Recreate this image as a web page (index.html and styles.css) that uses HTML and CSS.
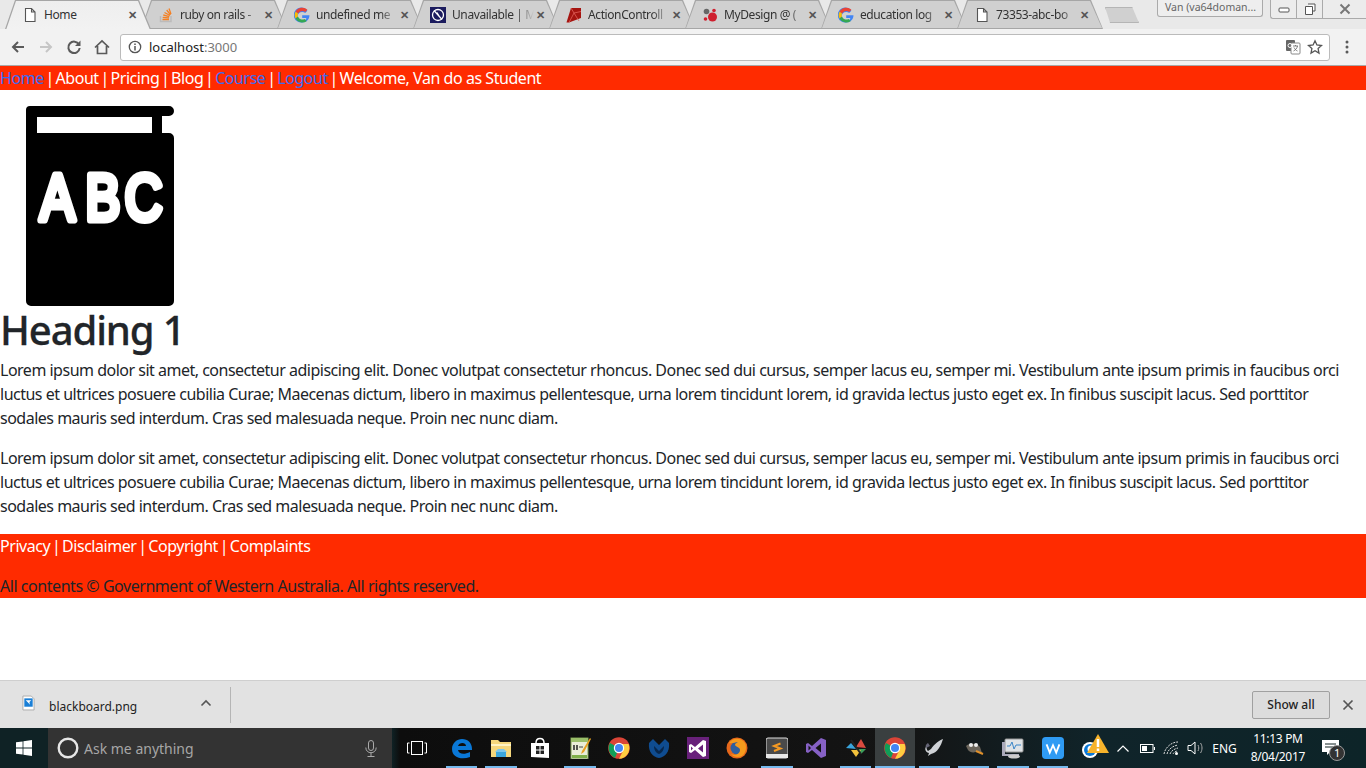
FILE: index.html
```html
<!DOCTYPE html>
<html>

<head>
  <meta charset="utf-8">
  <meta name="viewport" content="width=device-width">
  <title>Home</title>
  <link rel="stylesheet" href="styles.css">
</head>

<body>
  <!-- browser tabs -->
  <header class="tabstrip">
    <div class="tab active">
      <svg class="favicon" viewBox="0 0 16 16"><path d="M3.5 1.5h6l3.500 3.500v9.500h-9.500zM9.500 1.500v3.500h3.500" fill="#fff" stroke="#555" stroke-width="1.100"/></svg>
      <span class="tab-title">Home</span><span class="tab-close">✕</span>
    </div>
    <div class="tab">
      <svg class="favicon" viewBox="0 0 16 16"><path d="M2.500 9v5.500h10.500V9" fill="none" stroke="#bcbbbb" stroke-width="1.500"/><path d="M4.500 12.500h6.500M4.700 10.300l6.300.6M5.300 8l6 1.700M6.500 5.500l5.500 3M8.700 3l3.800 4.800M11 1.500l2 5.500" fill="none" stroke="#f48024" stroke-width="1.300"/></svg>
      <span class="tab-title">ruby on rails -</span><span class="tab-close">✕</span>
    </div>
    <div class="tab">
      <svg class="favicon" viewBox="0 0 16 16"><use href="#g-logo"/></svg>
      <span class="tab-title">undefined me</span><span class="tab-close">✕</span>
    </div>
    <div class="tab">
      <svg class="favicon" viewBox="0 0 16 16"><rect width="16" height="16" fill="#1c1c5e"/><circle cx="8" cy="8" r="5.500" fill="none" stroke="#fff" stroke-width="1.300"/><path d="M4 3.500l8 9M7 5.500l3 5" stroke="#fff" stroke-width="1.200"/></svg>
      <span class="tab-title">Unavailable | M</span><span class="tab-close">✕</span>
    </div>
    <div class="tab">
      <svg class="favicon" viewBox="0 0 16 16"><path d="M5 1h10v10L3 15.500H.500z" fill="#a51410"/><path d="M5 1l3 5 7-1.500M8 6l-5 9.500M8 6l5 8" fill="none" stroke="#e2615a" stroke-width=".8"/></svg>
      <span class="tab-title">ActionControll</span><span class="tab-close">✕</span>
    </div>
    <div class="tab">
      <svg class="favicon" viewBox="0 0 16 16"><circle cx="4.500" cy="4.500" r="2.800" fill="#666"/><circle cx="10.500" cy="10" r="4.500" fill="#cf1f2e"/><circle cx="12" cy="3.500" r="1.800" fill="#cf1f2e"/><circle cx="3.500" cy="12" r="1.800" fill="#cf1f2e"/></svg>
      <span class="tab-title">MyDesign @ (</span><span class="tab-close">✕</span>
    </div>
    <div class="tab">
      <svg class="favicon" viewBox="0 0 16 16"><use href="#g-logo"/></svg>
      <span class="tab-title">education log</span><span class="tab-close">✕</span>
    </div>
    <div class="tab">
      <svg class="favicon" viewBox="0 0 16 16"><path d="M3.500 1.500h6l3.500 3.500v9.500h-9.500zM9.500 1.500v3.500h3.500" fill="#fff" stroke="#555" stroke-width="1.100"/></svg>
      <span class="tab-title">73353-abc-bo</span><span class="tab-close">✕</span>
    </div>
    <div class="new-tab"></div>
    <div class="window-controls">
      <div class="profile">Van (va64doman...</div>
      <div class="win-buttons">
        <span class="win-btn"><svg width="12" height="8" viewBox="0 0 12 8"><rect x="1" y="3" width="10" height="4" rx="1" fill="#fff" stroke="#555"/></svg></span>
        <span class="win-btn"><svg width="12" height="12" viewBox="0 0 12 12"><path d="M4 1h7v7H9M1.500 3.500h7v8h-7z" fill="#fff" stroke="#555"/></svg></span>
        <span class="win-btn wide"><svg width="12" height="12" viewBox="0 0 12 12"><path d="M1.500 1.500l9 9M10.500 1.500l-9 9" stroke="#777" stroke-width="2"/></svg></span>
      </div>
    </div>
  </header>

  <!-- address bar -->
  <div class="toolbar">
    <svg class="tool-icon" viewBox="0 0 16 16"><path d="M14 8H3M8 3L3 8l5 5" fill="none" stroke="#5a5a5a" stroke-width="2"/></svg>
    <svg class="tool-icon" viewBox="0 0 16 16"><path d="M2 8h11M8 3l5 5-5 5" fill="none" stroke="#c6c6c6" stroke-width="2"/></svg>
    <svg class="tool-icon" viewBox="0 0 16 16"><path d="M13 5.500A5.700 5.700 0 1 0 13.700 9" fill="none" stroke="#5a5a5a" stroke-width="2"/><path d="M14.500 1.500v5.500H9z" fill="#5a5a5a"/></svg>
    <svg class="tool-icon" viewBox="0 0 16 16"><path d="M1 8.500L8 2l7 6.500M3.500 7v7.500h9V7" fill="none" stroke="#5a5a5a" stroke-width="1.700"/></svg>
    <div class="omnibox">
      <svg class="info" viewBox="0 0 14 14"><circle cx="7" cy="7" r="5.700" fill="none" stroke="#555" stroke-width="1.300"/><path d="M7 6v4.500M7 3.500v1.500" stroke="#555" stroke-width="1.500"/></svg>
      <span class="url">localhost<span class="port">:3000</span></span>
      <svg class="omni-right" viewBox="0 0 16 16"><rect x="1" y="1" width="9" height="11" rx="1" fill="#666"/><rect x="6" y="4" width="9" height="11" rx="1" fill="#fff" stroke="#888"/><path d="M8 7h5M10.500 6v1M12.500 7c-.5 2.500-2 4-4 5M9 8.500c.8 1.500 2 3 3.500 3.500" fill="none" stroke="#666" stroke-width=".8"/><circle cx="5" cy="6.500" r="2" fill="none" stroke="#fff"/></svg>
      <svg class="omni-right star" viewBox="0 0 16 16"><path d="M8 1.800l1.900 4.200 4.600.5-3.400 3.100.9 4.500-4-2.300-4 2.300.9-4.500L1.500 6.500l4.600-.5z" fill="#fff" stroke="#555" stroke-width="1.300"/></svg>
    </div>
    <svg class="menu-dots" viewBox="0 0 4 16"><circle cx="2" cy="3" r="1.500"/><circle cx="2" cy="8" r="1.500"/><circle cx="2" cy="13" r="1.500"/></svg>
  </div>

  <!-- the page itself -->
  <div class="page">
    <nav class="topnav">
      <a href="#">Home</a> <span class="sep">|</span> About <span class="sep">|</span> Pricing <span class="sep">|</span> Blog <span class="sep">|</span> <a href="#">Course</a> <span class="sep">|</span> <a href="#">Logout</a> <span class="sep">|</span> Welcome, Van do as Student
    </nav>

    <svg class="logo" width="200" height="216" viewBox="0 0 200 216">
      <path d="M30 16h139a5 5 0 0 1 0 10h-7v17h7a5 5 0 0 1 5 5v163a5 5 0 0 1-5 5H31a5 5 0 0 1-5-5V20a4 4 0 0 1 4-4z"/>
      <rect x="37" y="27" width="115" height="16" fill="#fff"/>
      <text class="logo-text" x="50 107 156" y="130.500" transform="scale(0.8 1)">ABC</text>
    </svg>

    <h1>Heading 1</h1>
    <p>Lorem ipsum dolor sit amet, consectetur adipiscing elit. Donec volutpat consectetur rhoncus. Donec sed dui cursus, semper lacus eu, semper mi. Vestibulum ante ipsum primis in faucibus orci luctus et ultrices posuere cubilia Curae; Maecenas dictum, libero in maximus pellentesque, urna lorem tincidunt lorem, id gravida lectus justo eget ex. In finibus suscipit lacus. Sed porttitor sodales mauris sed interdum. Cras sed malesuada neque. Proin nec nunc diam.</p>
    <p>Lorem ipsum dolor sit amet, consectetur adipiscing elit. Donec volutpat consectetur rhoncus. Donec sed dui cursus, semper lacus eu, semper mi. Vestibulum ante ipsum primis in faucibus orci luctus et ultrices posuere cubilia Curae; Maecenas dictum, libero in maximus pellentesque, urna lorem tincidunt lorem, id gravida lectus justo eget ex. In finibus suscipit lacus. Sed porttitor sodales mauris sed interdum. Cras sed malesuada neque. Proin nec nunc diam.</p>

    <footer class="site-footer">
      <div class="footer-links">Privacy <span class="sep">|</span> Disclaimer <span class="sep">|</span> Copyright <span class="sep">|</span> Complaints</div>
      <div class="footer-note">All contents © Government of Western Australia. All rights reserved.</div>
    </footer>
  </div>

  <!-- download shelf -->
  <div class="shelf">
    <div class="download">
      <svg class="file-icon" viewBox="0 0 14 16"><path d="M1 .5h9l3 3v12H1z" fill="#fff" stroke="#aaa"/><rect x="2.500" y="3" width="9" height="9" fill="#1a7fd6"/><path d="M4 5h6l-2 2 .5 3-1.500-2z" fill="#fff"/></svg>
      <span class="file-name">blackboard.png</span>
      <svg class="chevron" viewBox="0 0 12 8"><path d="M1.500 6.500L6 2l4.500 4.500" fill="none" stroke="#555" stroke-width="1.600"/></svg>
    </div>
    <button class="show-all">Show all</button>
    <svg class="shelf-close" viewBox="0 0 12 12"><path d="M1.500 1.500l9 9M10.500 1.500l-9 9" stroke="#555" stroke-width="1.700"/></svg>
  </div>

  <!-- windows taskbar -->
  <div class="taskbar">
    <div class="start">
      <svg width="16" height="16" viewBox="0 0 16 16"><path d="M0 2.300l6.600-.9v6.200H0zM7.400 1.300L16 0v7.600H7.400zM0 8.400h6.600v6.200L0 13.700zM7.400 8.400H16V16l-8.600-1.300z" fill="#fff"/></svg>
    </div>
    <div class="search">
      <svg width="22" height="22" viewBox="0 0 22 22"><circle cx="11" cy="11" r="9.300" fill="none" stroke="#e6e6e6" stroke-width="2.400"/></svg>
      <span class="search-text">Ask me anything</span>
      <svg class="mic" width="12" height="17" viewBox="0 0 12 17"><rect x="3.500" y=".5" width="5" height="10" rx="2.500" fill="none" stroke="#aaa"/><path d="M.8 7.500c0 7 10.400 7 10.400 0M6 12.500V16M2.500 16.500h7" fill="none" stroke="#aaa"/></svg>
    </div>
    <div class="task-view">
      <svg width="20" height="14" viewBox="0 0 20 14"><rect x="4.500" y=".5" width="11" height="13" fill="none" stroke="#fff"/><path d="M2.500 2H.5v10h2M17.500 2h2v10h-2" fill="none" stroke="#fff"/></svg>
    </div>
    <div class="apps">
      <span class="app run"><svg viewBox="0 0 22 22"><path d="M11 2c6 0 10 4 10 10v1H7c.5 4 6 5 12 2v5c-8 3-18 1-18-8C1 6 6 2 11 2zm4 7c0-4-7-4-8 0z" fill="#0a78d7"/></svg></span>
      <span class="app run"><svg viewBox="0 0 22 22"><path d="M1 3h7l2 2h11v15H1z" fill="#f5d77c"/><rect x="1" y="7" width="20" height="2" fill="#fff3c4"/><path d="M6 15h10v5H6z" fill="#3aa6dd"/><path d="M8 12h6l3 3H5z" fill="#7cc7ec"/></svg></span>
      <span class="app"><svg viewBox="0 0 22 22"><path d="M2 6h18v15l-18-1z" fill="#fff"/><path d="M7 6c0-6 8-6 8 0" fill="none" stroke="#fff" stroke-width="1.500"/><path d="M7 9h3.500v3.500H7zM11.500 9H15v3.500h-3.500zM7 13.500h3.500V17H7zM11.500 13.500H15V17h-3.500z" fill="#222"/></svg></span>
      <span class="app run"><svg viewBox="0 0 22 22"><rect x="2" y="1" width="17" height="21" fill="#e9edd8" stroke="#7a9a50"/><rect x="2" y="1" width="17" height="4" fill="#9abf6a"/><path d="M5 8v5M8 8v5" stroke="#222" stroke-width="1.500"/><path d="M10 10h4" stroke="#444"/><path d="M21 1l-8 13-1 3 3-2 7-13z" fill="#e8a020"/><path d="M3 18h15v3H3z" fill="#7fb04a"/></svg></span>
      <span class="app"><svg viewBox="0 0 22 22"><use href="#chrome-logo"/></svg></span>
      <span class="app"><svg viewBox="0 0 22 22"><path d="M11 21C5 20 0 15 1 6l4-4 6 6 6-6 4 4c1 9-4 14-10 15z" fill="#0f4c90"/><path d="M11 17c-3-1-5-4-5-8l5 5 5-5c0 4-2 7-5 8z" fill="#07274d"/></svg></span>
      <span class="app"><svg viewBox="0 0 22 22"><rect x="0" y="0" width="22" height="23" fill="#68217a"/><path d="M16 3L8 10 4 7 2 8v7l2 1 4-3 8 7 3-1V4zM4 9.500l2 2-2 2zM16 7.500v8l-5-4z" fill="#fff"/></svg></span>
      <span class="app"><svg viewBox="0 0 22 22"><circle cx="11" cy="11" r="10.500" fill="#e5671b"/><circle cx="11" cy="11" r="6.500" fill="#2f5f9e"/><path d="M3 6c3-5 12-6 16 0 2 4 1 10-3 13-4 2-9 1-11-2 4 2 9 0 9-4 0-3-4-3-5-5 0-2 2-2 3-3-3 0-6 2-9 1z" fill="#f59b1d"/></svg></span>
      <span class="app run"><svg viewBox="0 0 22 22"><rect x="0" y="1" width="22" height="20" rx="2" fill="#4a4a4a" stroke="#ddd"/><rect x="0" y="17" width="22" height="4" fill="#e8e8e8"/><path d="M14.500 6.500L8 9l6.500 2.500L8 14" fill="none" stroke="#f59a23" stroke-width="2"/></svg></span>
      <span class="app"><svg viewBox="0 0 22 22"><path d="M16 1l5 2v16l-5 2L7 13l-4 3-2-1V7l2-1 4 3zM3.500 8.500v5L6 11zM16 6.500L10.500 11l5.500 4.500z" fill="#8661c5"/></svg></span>
      <span class="app run"><svg viewBox="0 0 22 22"><path d="M11 12L1 11l5-5z" fill="#39a4dc"/><path d="M11 10l5-8 5 9z" fill="#d94b3f"/><path d="M11 12l10 0-5 5z" fill="#3c9f5c"/><path d="M6 13h10l-5 7z" fill="#f2c23c"/><path d="M6 3l10 14" stroke="#222" stroke-width="2"/></svg></span>
      <span class="app active"><svg viewBox="0 0 22 22"><use href="#chrome-logo"/></svg></span>
      <span class="app run"><svg viewBox="0 0 22 22"><path d="M20 2c-3 1-9 5-12 10l-3 2c-2-2-2-5 1-6-5 1-5 7 0 8l-1 3 3-2c6-1 10-8 12-15z" fill="#cfd2d6"/><path d="M5 6c-2 1-3 3-2 5l4-2z" fill="#667"/></svg></span>
      <span class="app run"><svg viewBox="0 0 22 22"><path d="M3 9c3-3 11-3 14 1l2 6-4-2c-3 2-8 2-10-1z" fill="#6b655b"/><circle cx="8" cy="8" r="2" fill="#eee"/><circle cx="13" cy="8" r="2" fill="#eee"/><path d="M13 14l7 3" stroke="#e0902a" stroke-width="2"/></svg></span>
      <span class="app run"><svg viewBox="0 0 22 22"><rect x="3" y="2" width="18" height="13" rx="1" fill="#dfe3e6" stroke="#999"/><path d="M5 9h3l2-4 2 7 2-4h5" fill="none" stroke="#3a86c8"/><path d="M0 5h3v12h14v2H0z" fill="#aab"/><ellipse cx="12" cy="19.500" rx="6" ry="2" fill="#ccc"/></svg></span>
      <span class="app run"><svg viewBox="0 0 24 24"><rect width="24" height="24" rx="4" fill="#2f9bf4"/><path d="M5 8l3.500 9L12 9l3.500 8L19 8" fill="none" stroke="#fff" stroke-width="2"/></svg></span>
    </div>
    <div class="tray">
      <span class="tray-alert">
        <svg width="22" height="22" viewBox="0 0 22 22"><circle cx="9" cy="13" r="8" fill="#fff"/><circle cx="9" cy="13" r="6" fill="#0a78d7"/><circle cx="10" cy="12" r="3.500" fill="#fff"/></svg>
        <svg class="warning" width="22" height="20" viewBox="0 0 22 20"><path d="M11 0l11 19H0z" fill="#f7b32b"/><path d="M11 5v8M11 14.500V17" stroke="#fff" stroke-width="2.500"/></svg>
      </span>
      <svg width="12" height="7" viewBox="0 0 12 7"><path d="M.5 6.500L6 1l5.500 5.500" fill="none" stroke="#fff" stroke-width="1.200"/></svg>
      <svg class="battery" width="15" height="9" viewBox="0 0 15 9"><rect x=".5" y=".5" width="12.500" height="8" fill="none" stroke="#fff"/><rect x="2" y="2" width="5" height="5" fill="#fff"/><rect x="14" y="3" width="1" height="3" fill="#fff"/></svg>
      <svg width="16" height="14" viewBox="0 0 16 14"><path d="M1 13C2 7 8 1 15 1M4 13c1-4 5-8 11-9M7 13c1-3 4-5 8-6M10 13c.5-1 2-3 5-3" fill="none" stroke="#ddd" stroke-dasharray="2 1"/><circle cx="13.500" cy="12.500" r="1.500" fill="#fff"/></svg>
      <svg width="17" height="14" viewBox="0 0 17 14"><path d="M1 4.500h3L8 1v12L4 9.500H1z" fill="none" stroke="#fff"/><path d="M11 4c1 2 1 4 0 6M13.500 2c2 3 2 7 0 10" fill="none" stroke="#aaa"/></svg>
      <span class="lang">ENG</span>
      <div class="clock"><span>11:13 PM</span><span>8/04/2017</span></div>
      <span class="notify">
        <svg width="17" height="16" viewBox="0 0 17 16"><path d="M0 0h17v12H8l-3 3v-3H0z" fill="#fff"/><path d="M3 4h11M3 7h11" stroke="#122"/></svg>
        <span class="notify-count">1</span>
      </span>
    </div>
  </div>

  <svg class="defs" width="0" height="0">
    <defs>
      <g id="g-logo">
        <path d="M15.500 8.200H8.200v2.900h4.200c-.4 2-2.100 3-4.200 3a4.600 4.600 0 0 1 0-9.200c1.100 0 2.200.4 3 1.100l2.200-2.200A7.500 7.500 0 1 0 8.200 15.500c3.800 0 7.300-2.700 7.300-7.500z" fill="#4285f4"/>
        <path d="M1.500 4.700l2.500 1.900a4.600 4.600 0 0 1 4.200-2.700c1.100 0 2.200.4 3 1.100l2.200-2.200A7.500 7.500 0 0 0 1.500 4.700z" fill="#ea4335"/>
        <path d="M1.500 4.700a7.500 7.500 0 0 0 0 6.700L4 9.400a4.600 4.600 0 0 1 0-2.800z" fill="#fbbc05"/>
        <path d="M1.500 11.400a7.500 7.500 0 0 0 11.300 2.500l-2.400-1.900a4.600 4.600 0 0 1-6.400-2.600z" fill="#34a853"/>
      </g>
      <g id="chrome-logo">
        <circle cx="11" cy="11" r="10.800" fill="#db4437"/>
        <path d="M11 11L2 6A10.800 10.800 0 0 0 7 21z" fill="#0f9d58"/>
        <path d="M11 7h9.600a10.800 10.800 0 0 1-9.600 14.800L15 14z" fill="#ffcd40"/>
        <circle cx="11" cy="11" r="5.200" fill="#fff"/>
        <circle cx="11" cy="11" r="4" fill="#4285f4"/>
      </g>
    </defs>
  </svg>
</body>

</html>
```

FILE: styles.css
```css
* {
  box-sizing: border-box;
}

html, body {
  height: 100%;
}

body {
  display: flex;
  flex-direction: column;
  margin: 0;
  overflow: hidden;
  background-color: white;
  font-family: "Noto Sans", "Open Sans", sans-serif;
}

/* tabs */
.tabstrip {
  display: flex;
  flex: 0 0 30px;
  padding-left: 5px;
  background-color: #e9e9e9;
  border-bottom: 1px solid #a9a9a9;
}

.tab {
  position: relative;
  display: flex;
  align-items: center;
  flex: 0 0 146px;
  min-width: 0;
  height: 29px;
  margin-right: -10px;
  padding: 0 14px 0 17px;
  font-size: 12px;
  color: #333;
}

.tab::before, .tab::after {
  content: "";
  position: absolute;
  clip-path: polygon(0 100%, 10px 0, calc(100% - 12px) 0, 100% 100%);
}

.tab::before {
  inset: 0;
  background-color: #a6a6a6;
}

.tab::after {
  inset: 1px 1px 1px 1px;
  background-color: #d0d0d0;
}

.tab.active {
  z-index: 2;
}

.tab.active::before {
  bottom: 0;
}

.tab.active::after {
  bottom: -1px;
  background: linear-gradient(#eeeeee, #f2f2f2);
}

.favicon, .tab-title, .tab-close {
  position: relative;
  z-index: 1;
}

.favicon {
  flex: 0 0 16px;
  width: 16px;
  height: 16px;
}

.tab-title {
  flex: 1;
  min-width: 0;
  margin-left: 6px;
  letter-spacing: -0.4px;
  overflow: hidden;
  white-space: nowrap;
  -webkit-mask-image: linear-gradient(to right, black 78%, transparent);
  mask-image: linear-gradient(to right, black 78%, transparent);
}

.tab.active .tab-title {
  -webkit-mask-image: none;
  mask-image: none;
}

.tab-close {
  margin-left: 2px;
  font-size: 11px;
  font-weight: bold;
  color: #555;
}

.new-tab {
  flex: 0 0 34px;
  height: 16px;
  margin: 7px 0 0 12px;
  background-color: #d0d0d0;
  border: 1px solid #b5b5b5;
  clip-path: polygon(0 0, 80% 0, 100% 100%, 15% 100%);
}

.window-controls {
  display: flex;
  gap: 7px;
  margin-left: auto;
}

.profile {
  width: 106px;
  height: 17px;
  padding-left: 7px;
  font-size: 10.500px;
  line-height: 15px;
  color: #666;
  background-color: #eee;
  border: 1px solid #aaa;
  border-top: 0;
  border-radius: 0 0 3px 3px;
  white-space: nowrap;
  overflow: hidden;
}

.win-buttons {
  display: flex;
  width: 96px;
  height: 19px;
  background-color: #ececec;
  border: 1px solid #aaa;
  border-top: 0;
  border-right: 0;
  border-radius: 0 0 0 3px;
}

.win-btn {
  display: flex;
  align-items: center;
  justify-content: center;
  flex: 0 0 26px;
  border-right: 1px solid #aaa;
}

.win-btn.wide {
  flex: 1;
  border-right: 0;
}

/* address bar */
.toolbar {
  position: relative;
  z-index: 3;
  display: flex;
  align-items: center;
  flex: 0 0 37px;
  padding: 0 10px;
  margin-top: -1px;
  background-color: #f2f2f2;
  border-bottom: 1px solid #a9a9a9;
}

.tool-icon {
  flex: 0 0 16px;
  width: 16px;
  height: 16px;
  margin-right: 12px;
}

.omnibox {
  display: flex;
  align-items: center;
  width: 1210px;
  height: 27px;
  margin-left: -2px;
  background-color: white;
  border: 1px solid #bbb;
  border-radius: 3px;
}

.info {
  width: 14px;
  height: 14px;
  margin-left: 7px;
}

.url {
  margin-left: 7px;
  font-size: 13px;
  color: #222;
}

.port {
  color: #777;
}

.omni-right {
  width: 16px;
  height: 16px;
  margin-left: auto;
  margin-right: 6px;
}

.omni-right.star {
  margin-left: 0;
}

.menu-dots {
  width: 4px;
  height: 16px;
  margin-left: 15px;
  fill: #5a5a5a;
}

/* page */
.page {
  flex: 1;
  min-height: 0;
  color: #212529;
  font-size: 16px;
  line-height: 24px;
  letter-spacing: -0.45px;
}

.topnav {
  height: 24px;
  color: white;
  background-color: #ff2b00;
}

.topnav a {
  color: #3b6cf0;
  text-decoration: none;
}

.sep {
  margin: 0 -2px;
}

.logo {
  display: block;
}

h1 {
  margin: 0 0 6px;
  padding-top: 2px;
  font-size: 40px;
  font-weight: 500;
  line-height: 44px;
  letter-spacing: -1.1px;
  -webkit-text-stroke: 0.3px #212529;
}

p {
  margin: 0 0 16px;
  padding-right: 10px;
  letter-spacing: -0.5px;
}

.site-footer {
  height: 64px;
  background-color: #ff2b00;
}

.footer-links {
  margin-bottom: 16px;
  color: white;
}

.logo-text {
  font-family: "Liberation Sans", sans-serif;
  font-size: 65px;
  letter-spacing: 0;
  fill: white;
  stroke: white;
  stroke-width: 7px;
  stroke-linejoin: round;
}

/* download shelf */
.shelf {
  display: flex;
  align-items: center;
  flex: 0 0 48px;
  background-color: #e2e2e2;
  border-top: 1px solid #cfcfcf;
  font-size: 12px;
  color: #222;
}

.download {
  display: flex;
  align-items: center;
  width: 231px;
  height: 36px;
  padding-left: 22px;
  border-right: 1px solid #b5b5b5;
}

.file-icon {
  width: 13px;
  height: 16px;
  margin-bottom: 4px;
}

.file-name {
  margin-left: 14px;
  padding-top: 3px;
}

.chevron {
  width: 12px;
  height: 8px;
  margin-left: 63px;
  margin-bottom: 3px;
}

.show-all {
  width: 78px;
  height: 28px;
  margin-left: auto;
  padding: 0;
  font-family: inherit;
  font-size: 12px;
  font-weight: 500;
  color: #222;
  background-color: #dcdcdc;
  border: 1px solid #a0a0a0;
  border-radius: 2px;
}

.shelf-close {
  width: 12px;
  height: 12px;
  margin: 0 12px;
}

/* taskbar */
.taskbar {
  display: flex;
  align-items: center;
  flex: 0 0 40px;
  color: white;
  background: linear-gradient(to right, #0f2225 0, #0f2225 392px, #0d0d0d 400px, #141414 900px, #10242a 1100px, #0d2428 100%);
}

.start {
  display: flex;
  align-items: center;
  justify-content: center;
  flex: 0 0 48px;
  height: 100%;
}

.search {
  display: flex;
  align-items: center;
  flex: 0 0 344px;
  height: 100%;
  padding-left: 9px;
  background-color: #333;
}

.search-text {
  margin-left: 5px;
  font-size: 14px;
  color: #a6a6a6;
}

.mic {
  margin-left: auto;
  margin-right: 15px;
}

.task-view {
  display: flex;
  justify-content: center;
  flex: 0 0 50px;
}

.apps {
  display: grid;
  grid-template-columns: repeat(16, 39.4px);
  height: 100%;
}

.app {
  position: relative;
  display: flex;
  align-items: center;
  justify-content: center;
}

.app svg {
  width: 22px;
  height: 22px;
}

.app.run::after, .app.active::after {
  content: "";
  position: absolute;
  left: 4px;
  right: 4px;
  bottom: 0;
  height: 2px;
  background-color: #76b9ed;
}

.app.active {
  background-color: #3a3f40;
}

.app.active::after {
  left: 0;
  right: 0;
}

.tray {
  display: flex;
  align-items: center;
  flex: 1;
  gap: 8px;
  padding-left: 9px;
}

.tray-alert {
  position: relative;
  display: flex;
  margin-right: 6px;
}

.warning {
  position: absolute;
  left: 6px;
  top: -3px;
}

.battery {
  margin-left: 3px;
}

.lang {
  font-size: 12px;
}

.clock {
  display: flex;
  flex-direction: column;
  align-items: center;
  margin-left: 6px;
  font-size: 12px;
  line-height: 18px;
  letter-spacing: -0.3px;
}

.notify {
  position: relative;
  display: flex;
  margin-left: 9px;
}

.notify-count {
  position: absolute;
  left: 7px;
  top: 5px;
  width: 16px;
  height: 16px;
  font-size: 11px;
  line-height: 14px;
  text-align: center;
  background-color: #333;
  border: 1px solid #999;
  border-radius: 50%;
}

.defs {
  position: absolute;
}
```
